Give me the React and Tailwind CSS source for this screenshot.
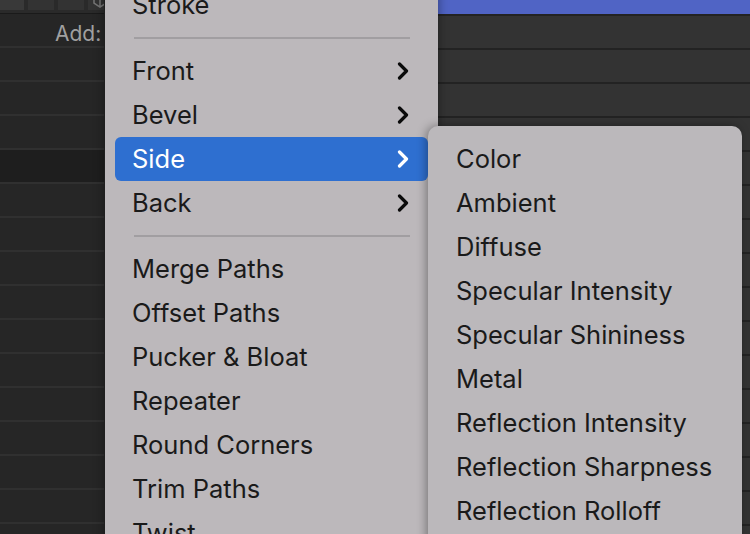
import React from "react";

const mainItems = [
  { t: "Stroke" },
  { sep: true },
  { t: "Front", sub: true },
  { t: "Bevel", sub: true },
  { t: "Side", sub: true, active: true },
  { t: "Back", sub: true },
  { sep: true },
  { t: "Merge Paths" },
  { t: "Offset Paths" },
  { t: "Pucker & Bloat" },
  { t: "Repeater" },
  { t: "Round Corners" },
  { t: "Trim Paths" },
  { t: "Twist" },
];

const subItems = [
  "Color",
  "Ambient",
  "Diffuse",
  "Specular Intensity",
  "Specular Shininess",
  "Metal",
  "Reflection Intensity",
  "Reflection Sharpness",
  "Reflection Rolloff",
];

function Chevron({ white }) {
  return (
    <svg width="12" height="18" viewBox="0 0 12 18" className="shrink-0">
      <path
        d="M2.5 2 L9.5 9 L2.5 16"
        fill="none"
        stroke={white ? "#ffffff" : "#0a0a0a"}
        strokeWidth="3.2"
        strokeLinecap="round"
        strokeLinejoin="round"
      />
    </svg>
  );
}

const font = { fontFamily: "Inter, 'Noto Sans', sans-serif" };

export default function App() {
  const leftRows = Array.from({ length: 15 });
  const rightRows = Array.from({ length: 16 });
  return (
    <div className="relative w-[750px] h-[534px] overflow-hidden bg-[#262626]" style={font}>
      {/* background panels */}
      <div className="flex h-full">
        <div className="w-[300px] h-full flex flex-col overflow-hidden bg-[#262626]">
          <div className="h-[13px] shrink-0 flex flex-col bg-[#2a2a2a]">
            <div className="h-[10px] flex gap-[4px]">
              <div className="w-[24px] h-full bg-[#393939]" />
              <div className="w-[26px] h-full bg-[#333333]" />
              <div className="w-[26px] h-full bg-[#333333]" />
              <div className="w-[24px] h-full bg-[#333333] flex items-start justify-center">
                <svg width="18" height="10" viewBox="0 0 18 10">
                  <path
                    d="M3 0 L3 3 L9 7 L15 3 L15 0 M9 7 L9 0"
                    fill="none"
                    stroke="#777777"
                    strokeWidth="1.5"
                  />
                </svg>
              </div>
            </div>
          </div>
          <div className="h-[1px] shrink-0 bg-[#1a1a1a]" />
          <div className="h-[34px] shrink-0 border-b-[2px] border-[#303030] flex items-center pt-[7px] bg-[#262626]">
            <span className="ml-[55px] text-[21px] leading-[24px] text-[#a0a0a0]">Add:</span>
          </div>
          {leftRows.map((_, i) => (
            <div
              key={i}
              className={`h-[34px] shrink-0 border-b-[2px] border-[#303030] ${
                i === 3 ? "bg-[#1e1e1e]" : "bg-[#262626]"
              }`}
            />
          ))}
        </div>
        <div className="flex-1 h-full flex flex-col overflow-hidden bg-[#333333]">
          <div className="h-[14px] shrink-0 bg-[#5064c5]" />
          {rightRows.map((_, i) => (
            <div key={i} className="h-[34px] shrink-0 border-t-[2px] border-[#232323] bg-[#333333]" />
          ))}
        </div>
      </div>

      {/* main menu */}
      <div className="absolute left-[104px] top-[-17px] w-[334px] h-[600px] bg-[#bcb8bb] border-l border-[#1e1e1e] px-[10px] shadow-[0_0_10px_rgba(0,0,0,0.4)]">
        {mainItems.map((it, i) =>
          it.sep ? (
            <div key={i} className="h-[22px] flex items-center pl-[19px] pr-[18px]">
              <div className="h-[2px] w-full bg-[#a19ea1]" />
            </div>
          ) : (
            <div
              key={i}
              className={`h-[44px] rounded-[6px] flex items-center justify-between pl-[17px] pr-[19px] text-[25.5px] ${
                it.active ? "bg-[#2e6fd0] text-white" : "text-[#1a1a1a]"
              }`}
            >
              <span>{it.t}</span>
              {it.sub && <Chevron white={it.active} />}
            </div>
          )
        )}
      </div>

      {/* submenu */}
      <div className="absolute left-[428px] top-[126px] w-[314px] h-[440px] rounded-[10px] bg-[#bbb8bb] pt-[11px] px-[10px] shadow-[-2px_0_10px_rgba(0,0,0,0.35)]">
        {subItems.map((t) => (
          <div key={t} className="h-[44px] flex items-center pl-[18px] text-[25.5px] text-[#1a1a1a]">
            {t}
          </div>
        ))}
      </div>
    </div>
  );
}
